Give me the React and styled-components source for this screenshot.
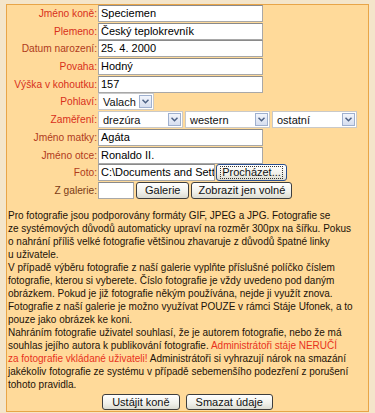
import React from "react";
import styled, { createGlobalStyle } from "styled-components";

const Global = createGlobalStyle`
  html, body { margin: 0; padding: 0; background: #f4e5ca; }
  body { font-family: "Liberation Sans", Arial, sans-serif; }
`;

const Page = styled.div`
  width: 375px;
  height: 413px;
  box-sizing: border-box;
  padding: 4px 6px 0 6px;
`;

const Panel = styled.div`
  box-sizing: border-box;
  width: 363px;
  background: #ffda9a;
  border: 1px solid #e8a548;
  display: flex;
  flex-direction: column;
  padding: 0 0 1px 0;
`;

const Form = styled.div`
  display: grid;
  grid-template-columns: 90px auto;
  column-gap: 1px;
  row-gap: 0.7px;
  align-items: center;
`;

const Label = styled.label`
  text-align: right;
  font-size: 10.2px;
  color: ${(p) => (p.$tone === "opt" ? "#b03a1c" : p.$tone === "dim" ? "#7c3a16" : "#d8301a")};
  white-space: nowrap;
`;

const Field = styled.div`
  display: flex;
  align-items: center;
  gap: ${(p) => p.$gap || 0}px;
  height: 17px;
`;

const TextBox = styled.div`
  box-sizing: border-box;
  width: ${(p) => p.$w || 165}px;
  height: 17px;
  background: #fff;
  border: 1px solid #a8a8a8;
  border-top-color: #8a8a8a;
  font-size: 11px;
  color: #000;
  padding: 0 2px;
  line-height: 15px;
  white-space: nowrap;
  overflow: hidden;
`;

const SelectBox = styled.div`
  box-sizing: border-box;
  width: ${(p) => p.$w}px;
  height: 17px;
  background: #fff;
  border: 1px solid #c9c9c9;
  display: flex;
  align-items: center;
  justify-content: space-between;
  padding: 0 1px 0 4px;
  font-size: 11px;
  color: #111;
`;

const Arrow = styled.span`
  box-sizing: border-box;
  width: 13px;
  height: 13px;
  border: 1px solid #9fb0cf;
  background: linear-gradient(#f2f5fc, #d6deef);
  display: flex;
  align-items: center;
  justify-content: center;
`;

const Btn = styled.button`
  box-sizing: border-box;
  height: ${(p) => p.$h || 16}px;
  ${(p) => (p.$w ? `width: ${p.$w}px;` : "")}
  padding: 0 ${(p) => p.$px ?? 6}px;
  font-family: "Liberation Sans", Arial, sans-serif;
  font-size: 11px;
  color: #111;
  background: linear-gradient(#ffffff, #f0f0ea 60%, #dcdcd2);
  border: 1px solid ${(p) => (p.$focus ? "#2a4f8f" : "#3e3e3e")};
  border-radius: 3px;
  display: flex;
  align-items: center;
  justify-content: center;
  white-space: nowrap;
  cursor: pointer;
`;

const Focus = styled.span`
  border: 1px dotted #333;
  padding: 0 1px;
  line-height: 11px;
`;

const Text = styled.div`
  margin-top: 10px;
  padding-left: 1px;
  font-size: 10px;
  line-height: 13px;
  color: #1c1208;
  white-space: nowrap;
`;

const Red = styled.span`
  color: #e8321c;
`;

const Actions = styled.div`
  display: flex;
  justify-content: center;
  gap: 6px;
  margin-top: 3px;
`;

const Chevron = () => (
  <svg width="7" height="5" viewBox="0 0 7 5">
    <path d="M0.5 0.8 L3.5 3.8 L6.5 0.8" fill="none" stroke="#4d6185" strokeWidth="1.5" />
  </svg>
);

const Select = ({ w, value }) => (
  <SelectBox $w={w}>
    <span>{value}</span>
    <Arrow>
      <Chevron />
    </Arrow>
  </SelectBox>
);

export default function App() {
  return (
    <>
      <Global />
      <Page>
        <Panel>
          <Form>
            <Label>Jméno koně:</Label>
            <Field><TextBox>Speciemen</TextBox></Field>
            <Label>Plemeno:</Label>
            <Field><TextBox>Český teplokrevník</TextBox></Field>
            <Label $tone="opt">Datum narození:</Label>
            <Field><TextBox>25. 4. 2000</TextBox></Field>
            <Label>Povaha:</Label>
            <Field><TextBox>Hodný</TextBox></Field>
            <Label>Výška v kohoutku:</Label>
            <Field><TextBox>157</TextBox></Field>
            <Label>Pohlaví:</Label>
            <Field><Select w={56} value="Valach" /></Field>
            <Label>Zaměření:</Label>
            <Field $gap={2}>
              <Select w={85} value="drezúra" />
              <Select w={85} value="western" />
              <Select w={85} value="ostatní" />
            </Field>
            <Label $tone="opt">Jméno matky:</Label>
            <Field><TextBox>Agáta</TextBox></Field>
            <Label $tone="opt">Jméno otce:</Label>
            <Field><TextBox>Ronaldo II.</TextBox></Field>
            <Label $tone="opt">Foto:</Label>
            <Field $gap={1}>
              <TextBox $w={117}>C:\Documents and Setti</TextBox>
              <Btn $h={17} $w={71} $px={0} $focus><Focus>Procházet...</Focus></Btn>
            </Field>
            <Label $tone="dim">Z galerie:</Label>
            <Field $gap={2}>
              <TextBox $w={36} />
              <Btn $h={17} $px={8}>Galerie</Btn>
              <Btn $h={17} $px={6}>Zobrazit jen volné</Btn>
            </Field>
          </Form>
          <Text>
            Pro fotografie jsou podporovány formáty GIF, JPEG a JPG. Fotografie se<br />
            ze systémových důvodů automaticky upraví na rozměr 300px na šířku. Pokus<br />
            o nahrání příliš velké fotografie většinou zhavaruje z důvodů špatné linky<br />
            u uživatele.<br />
            V případě výběru fotografie z naší galerie vyplňte příslušné políčko číslem<br />
            fotografie, kterou si vyberete. Číslo fotografie je vždy uvedeno pod daným<br />
            obrázkem. Pokud je již fotografie někým používána, nejde ji využít znova.<br />
            Fotografie z naší galerie je možno využívat POUZE v rámci Stáje Ufonek, a to<br />
            pouze jako obrázek ke koni.<br />
            Nahráním fotografie uživatel souhlasí, že je autorem fotografie, nebo že má<br />
            souhlas jejího autora k publikování fotografie. <Red>Administrátoři stáje NERUČÍ</Red><br />
            <Red>za fotografie vkládané uživateli!</Red> Administrátoři si vyhrazují nárok na smazání<br />
            jakékoliv fotografie ze systému v případě sebemenšího podezření z porušení<br />
            tohoto pravidla.
          </Text>
          <Actions>
            <Btn $px={9}>Ustájit koně</Btn>
            <Btn $px={9}>Smazat údaje</Btn>
          </Actions>
        </Panel>
      </Page>
    </>
  );
}
